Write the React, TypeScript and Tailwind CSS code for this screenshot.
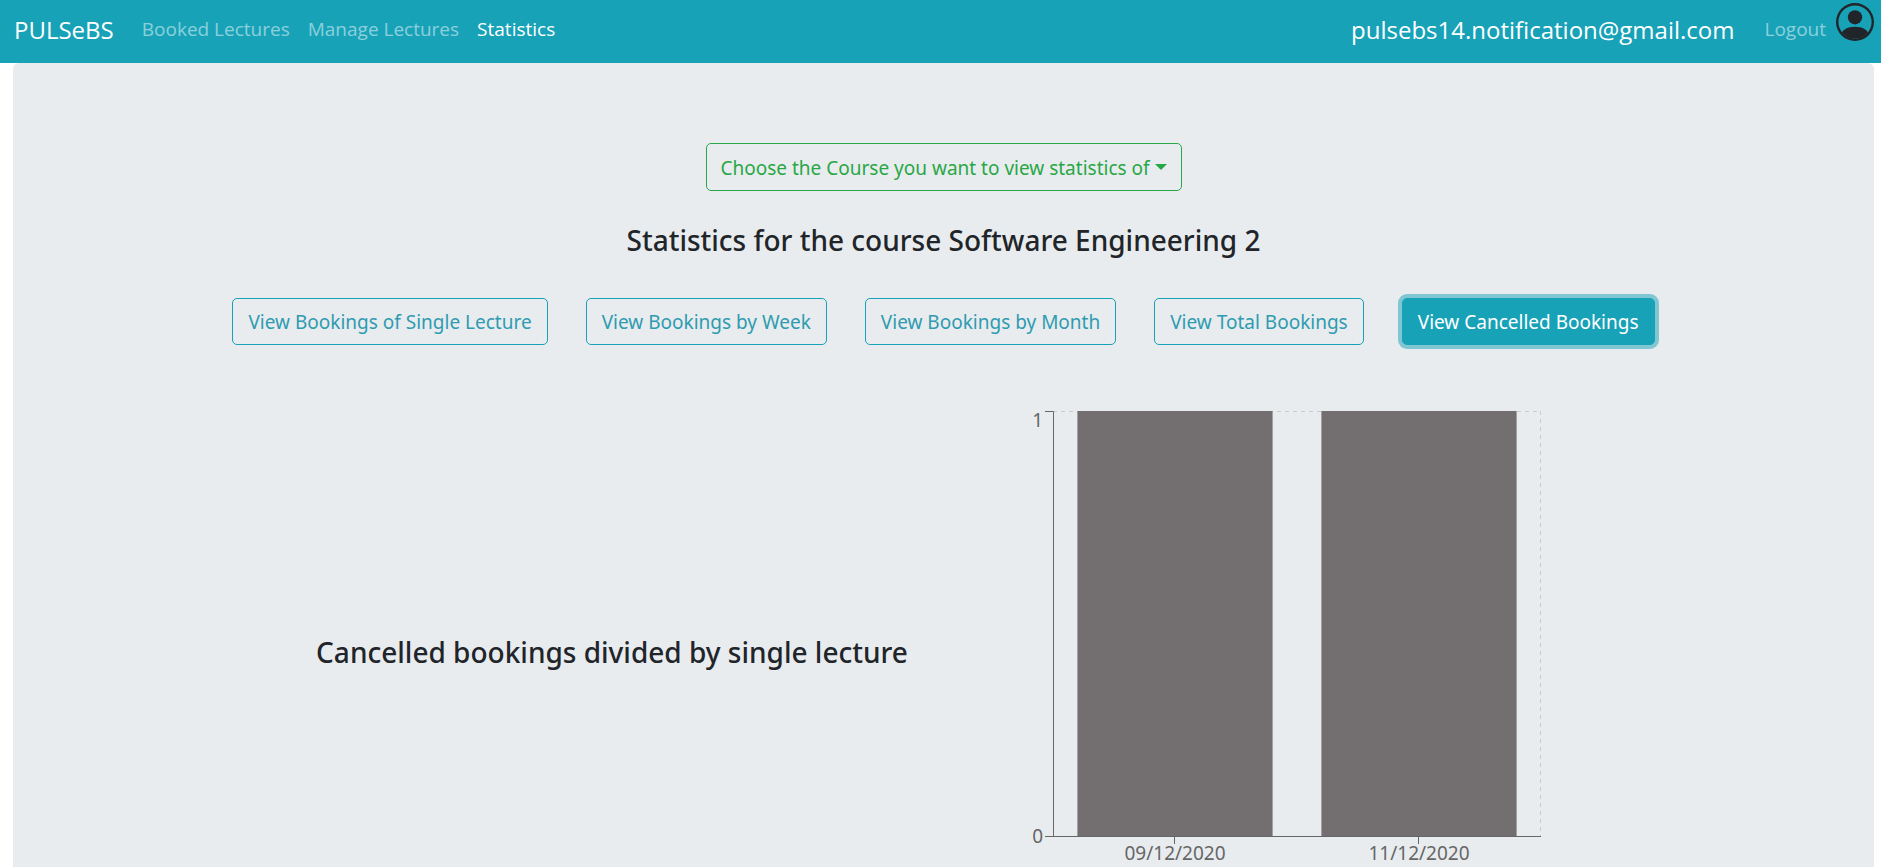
import { useState } from "react";

const navLinks = ["Booked Lectures", "Manage Lectures", "Statistics"];

const views = [
  "View Bookings of Single Lecture",
  "View Bookings by Week",
  "View Bookings by Month",
  "View Total Bookings",
  "View Cancelled Bookings",
];

const cancelled = [
  { date: "09/12/2020", count: 1 },
  { date: "11/12/2020", count: 1 },
];

function UserIcon() {
  return (
    <svg viewBox="0 0 16 16" className="h-[38px] w-[38px] fill-[#212529]" aria-hidden="true">
      <path d="M13.468 12.37C12.758 11.226 11.195 10 8 10s-4.757 1.225-5.468 2.37A6.987 6.987 0 0 0 8 15a6.987 6.987 0 0 0 5.468-2.63z" />
      <path fillRule="evenodd" d="M8 9a3 3 0 1 0 0-6 3 3 0 0 0 0 6z" />
      <path
        fillRule="evenodd"
        d="M8 1a7 7 0 1 0 0 14A7 7 0 0 0 8 1zM0 8a8 8 0 1 1 16 0A8 8 0 0 1 0 8z"
      />
    </svg>
  );
}

function Navbar() {
  return (
    <nav className="flex h-[63px] items-start bg-[#17a2b8] pr-[7px] pl-3.5 font-['Open_Sans','Noto_Sans',sans-serif]">
      <a href="#" className="mr-7 pt-3 text-[24px] leading-9 text-white">
        PULSeBS
      </a>
      <div className="flex gap-[18px] pt-3.5">
        {navLinks.map((label) => (
          <a
            key={label}
            href="#"
            className={
              label === "Statistics"
                ? "text-[19px] leading-[30px] text-white"
                : "text-[19px] leading-[30px] text-white/50"
            }
          >
            {label}
          </a>
        ))}
      </div>
      <span className="ml-auto pt-3 text-[24px] leading-9 text-white">
        pulsebs14.notification@gmail.com
      </span>
      <a href="#" className="ml-[30px] pt-3.5 text-[19px] leading-[30px] text-white/50">
        Logout
      </a>
      <span className="ml-2.5 pt-[3px]">
        <UserIcon />
      </span>
    </nav>
  );
}

function CourseSelect() {
  return (
    <div className="inline-grid items-center text-[#28a745]">
      <select
        aria-label="Course"
        className="col-start-1 row-start-1 h-12 appearance-none rounded-[5px] border border-[#28a745] bg-transparent pt-0.5 pr-[30px] pl-3.5 text-[19px]"
      >
        <option>Choose the Course you want to view statistics of</option>
        <option>Software Engineering 2</option>
      </select>
      <svg
        viewBox="0 0 12 6"
        className="pointer-events-none col-start-1 row-start-1 mr-[15px] h-1.5 w-3 justify-self-end fill-current"
        aria-hidden="true"
      >
        <path d="M0 0h12L6 6z" />
      </svg>
    </div>
  );
}

function CancelledChart() {
  const left = 90;
  const right = 578;
  const top = 6;
  const bottom = 431;
  const band = (right - left) / cancelled.length;
  return (
    <svg
      viewBox="0 0 624 462"
      className="h-[462px] w-[624px]"
      role="img"
      aria-label="Cancelled bookings divided by single lecture"
    >
      <g stroke="#ccc" strokeDasharray="4 4" fill="none">
        <path d={`M${left} ${top + 0.5}H${right}M${right - 0.5} ${top}V${bottom}`} />
      </g>
      <g fill="#736e70">
        {cancelled.map((d, i) => (
          <rect
            key={d.date}
            x={left + band * i + band * 0.1}
            y={bottom - d.count * (bottom - top)}
            width={band * 0.8}
            height={d.count * (bottom - top)}
          />
        ))}
      </g>
      <g stroke="#666" fill="none">
        <path d={`M${left - 8} ${top + 0.5}H${left + 0.5}V${bottom + 0.5}M${left - 8} ${bottom + 0.5}H${right}`} />
        {cancelled.map((d, i) => (
          <path key={d.date} d={`M${left + band * (i + 0.5) - 0.5} ${bottom}v8`} />
        ))}
      </g>
      <g fill="#666" className="text-[19px]">
        <text x={left - 10} y={top + 16} textAnchor="end">
          1
        </text>
        <text x={left - 10} y={bottom + 7} textAnchor="end">
          0
        </text>
        {cancelled.map((d, i) => (
          <text key={d.date} x={left + band * (i + 0.5)} y={bottom + 24} textAnchor="middle">
            {d.date}
          </text>
        ))}
      </g>
    </svg>
  );
}

export default function App() {
  const [active, setActive] = useState("View Cancelled Bookings");
  return (
    <div className="flex min-h-screen flex-col bg-white font-['Noto_Sans','Open_Sans',sans-serif] text-[#212529]">
      <Navbar />
      <main className="mr-[7px] ml-[13px] flex grow flex-col items-center rounded-t-md bg-[#e8ecef] pt-20">
        <CourseSelect />
        <h1 className="mt-[31px] text-[28px] leading-9 font-medium">
          Statistics for the course Software Engineering 2
        </h1>
        <div className="mt-10 flex flex-wrap justify-center gap-[38px]">
          {views.map((view) => (
            <button
              key={view}
              type="button"
              onClick={() => setActive(view)}
              className={
                view === active
                  ? "h-[47px] rounded-[5px] border border-[#17a2b8] bg-[#17a2b8] px-[15px] pt-0.5 text-[19px] text-white ring-4 ring-[#17a2b8]/50"
                  : "h-[47px] rounded-[5px] border border-[#17a2b8] px-[15px] pt-0.5 text-[19px] text-[#2e9bb0]"
              }
            >
              {view}
            </button>
          ))}
        </div>
        <section className="mt-[60px] grid w-full max-w-[1326px] grid-cols-2 items-center justify-items-center">
          <h2 className="pt-8 text-[28px] leading-9 font-medium">
            Cancelled bookings divided by single lecture
          </h2>
          <CancelledChart />
        </section>
      </main>
    </div>
  );
}
